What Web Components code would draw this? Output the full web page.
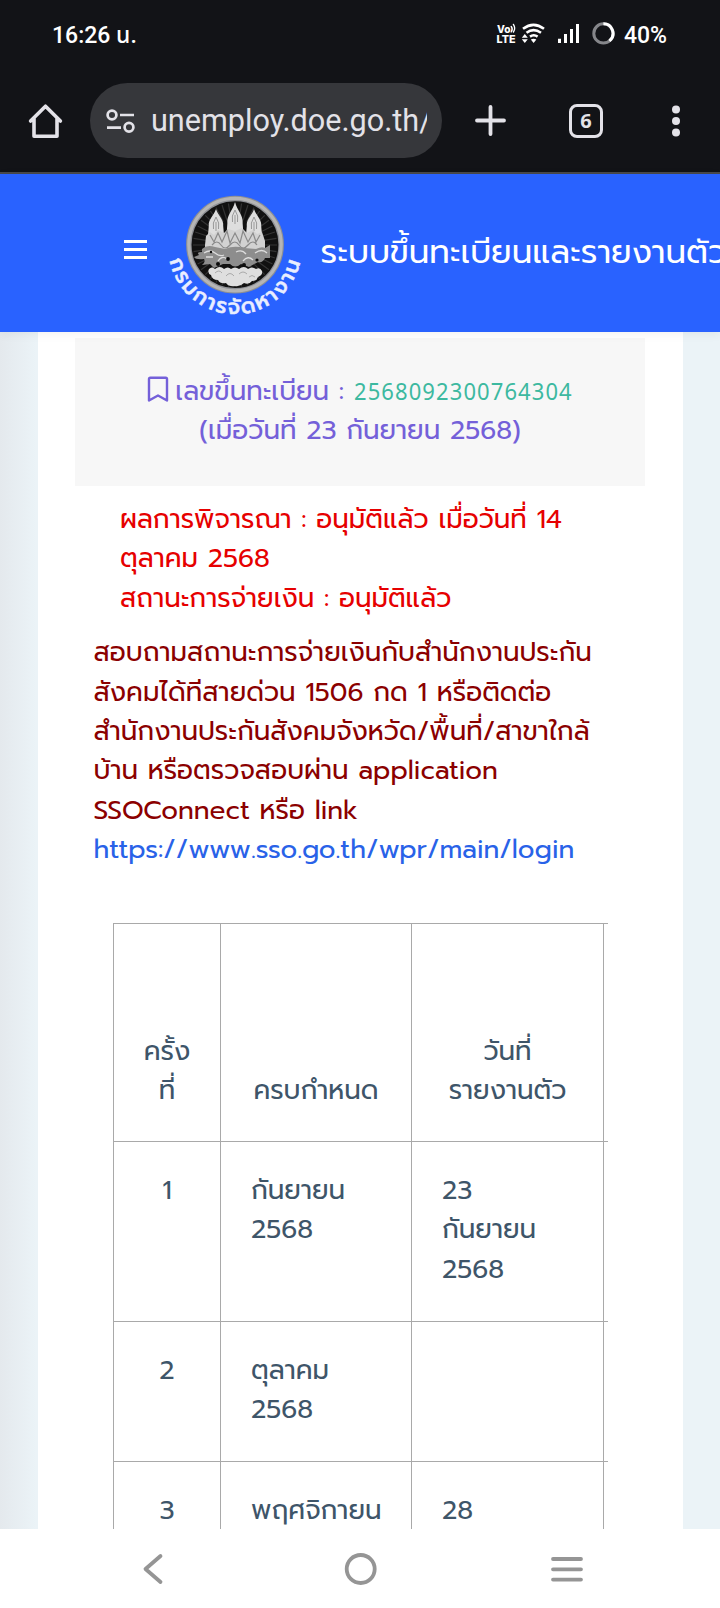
<!DOCTYPE html>
<html lang="th">
<head>
<meta charset="utf-8">
<title>ระบบขึ้นทะเบียนและรายงานตัว</title>
<style>
  body {
    margin: 0;
    width: 720px;
    height: 1608px;
    overflow: hidden;
    display: flex;
    flex-direction: column;
    font-family: Prompt, "Noto Sans Thai", "Noto Sans", sans-serif;
    background: #fff;
  }
</style>
</head>
<body>
<status-bar time="16:26 น." battery="40%"></status-bar>
<browser-bar url="unemploy.doe.go.th/" tabs="6"></browser-bar>
<site-header>ระบบขึ้นทะเบียนและรายงานตัว</site-header>
<page-panel>
  <register-card number="2568092300764304">
    <span slot="label">เลขขึ้นทะเบียน : </span>
    <span slot="date">(เมื่อวันที่ 23 กันยายน 2568)</span>
  </register-card>
  <result-note>
    <div>ผลการพิจารณา : อนุมัติแล้ว เมื่อวันที่ 14<br>ตุลาคม 2568</div>
    <div>สถานะการจ่ายเงิน : อนุมัติแล้ว</div>
  </result-note>
  <contact-note href="https://www.sso.go.th/wpr/main/login">สอบถามสถานะการจ่ายเงินกับสำนักงานประกัน<br>สังคมได้ทีสายด่วน 1506 กด 1 หรือติดต่อ<br>สำนักงานประกันสังคมจังหวัด/พื้นที่/สาขาใกล้<br>บ้าน หรือตรวจสอบผ่าน application<br>SSOConnect หรือ link</contact-note>
  <report-table></report-table>
</page-panel>
<nav-bar></nav-bar>

<script>
  class StatusBar extends HTMLElement {
    constructor() {
      super();
      this.attachShadow({ mode: "open" });
    }

    connectedCallback() {
      this.shadowRoot.innerHTML = `
        <style>
          :host {
            display: flex;
            flex: none;
            height: 70px;
            box-sizing: border-box;
            padding: 0 53px 0 52px;
            align-items: center;
            justify-content: space-between;
            background: #121317;
            color: #fff;
            font: 500 23px/70px Roboto, "Noto Sans Thai", sans-serif;
          }
          .icons { display: flex; align-items: center; }
          .text { padding-top: 1px; }
          .icons .text { margin-left: 8px; }
          svg { display: block; }
        </style>
        <span class="text">${this.getAttribute("time")}</span>
        <div class="icons">
          <svg width="126" height="40" viewBox="490 15 126 40">
            <g fill="#fff" font-family="Inter, sans-serif" font-weight="800">
              <text x="497" y="32.7" font-size="10.6" textLength="13.5" lengthAdjust="spacingAndGlyphs">Vo</text>
              <text x="496.5" y="42.8" font-size="10.8" textLength="19" lengthAdjust="spacingAndGlyphs">LTE</text>
            </g>
            <g fill="none" stroke="#fff" stroke-width="1.4" stroke-linecap="round">
              <path d="M511.2 26.5q2 2.6 0 5.4M513.4 24.4q2.6 4 0 7.6"/>
            </g>
            <g fill="none" stroke="#fff" stroke-width="2.6">
              <path d="M523 28.8Q533.5 20.8 544 28.8M526.5 32.8Q533.5 27.6 541 32.8M530 36.6Q533.7 34 537.6 36.6"/>
            </g>
            <path fill="#fff" d="M524.8 34l3 3.7h-6zM524.8 43l3-3.8h-6zM533.6 43l2.8-3.4q-2.8-1.8-5.6 0z"/>
            <path fill="#fff" d="M558 38.8h3V43h-3zM564 34h3v9h-3zM570 29h3v14h-3zM576 24h3v19h-3z"/>
            <circle cx="603.4" cy="33.4" r="9.6" fill="none" stroke="#85868a" stroke-width="3"/>
            <path d="M603.4 23.8A9.6 9.6 0 0 1 609.4 40.9" fill="none" stroke="#fff" stroke-width="3"/>
          </svg>
          <span class="text">${this.getAttribute("battery")}</span>
        </div>
      `;
    }
  }
  customElements.define("status-bar", StatusBar);

  class BrowserBar extends HTMLElement {
    constructor() {
      super();
      this.attachShadow({ mode: "open" });
    }

    connectedCallback() {
      this.shadowRoot.innerHTML = `
        <style>
          :host {
            display: flex;
            flex: none;
            height: 104px;
            box-sizing: border-box;
            padding: 13px 35px 14px 28px;
            border-bottom: 2px solid #48494c;
            align-items: center;
            background: #121317;
            color: #e3e2e8;
            font-family: Roboto, sans-serif;
          }
          svg { display: block; flex: none; }
          .url {
            display: flex;
            align-items: center;
            width: 352px;
            height: 75px;
            margin: 0 33px 0 27px;
            box-sizing: border-box;
            padding: 0 15px;
            border-radius: 38px;
            background: #36373b;
          }
          .url span {
            margin-left: 16px;
            width: 276px;
            overflow: hidden;
            white-space: nowrap;
            font-size: 30.6px;
            line-height: 46px;
          }
          .tabs {
            width: 34px;
            height: 34px;
            box-sizing: border-box;
            margin: 0 68px 0 63px;
            border: 3px solid #e3e2e8;
            border-radius: 8px;
            font: 700 20px/28px "Noto Sans", sans-serif;
            text-align: center;
          }
        </style>
        <svg width="35" height="36" viewBox="0 0 35 36" fill="none" stroke="#e3e2e8" stroke-width="3.6" stroke-linejoin="round" stroke-linecap="round">
          <path d="M2.6 18L17.5 3.2 32.4 18M6 15.5V33.2H29V15.5"/>
        </svg>
        <div class="url">
          <svg width="30" height="26" viewBox="0 0 30 26" fill="none" stroke="#e3e2e8" stroke-width="2.7">
            <circle cx="7" cy="7" r="4.4"/><path d="M15 7h14M2 19.7h14"/><circle cx="24" cy="19.3" r="4.4"/>
          </svg>
          <span>${this.getAttribute("url")}</span>
        </div>
        <svg width="31" height="31" viewBox="0 0 31 31" stroke="#e3e2e8" stroke-width="3.8" stroke-linecap="round"><path d="M15.5 2v27M2 15.5h27"/></svg>
        <div class="tabs">${this.getAttribute("tabs")}</div>
        <svg width="10" height="32" viewBox="0 0 10 32" fill="#e3e2e8"><circle cx="5" cy="4.5" r="4"/><circle cx="5" cy="16" r="4"/><circle cx="5" cy="27.5" r="4"/></svg>
      `;
    }
  }
  customElements.define("browser-bar", BrowserBar);

  // Department seal: three chedi-like flames over a conch and clouds
  class DoeSeal extends HTMLElement {
    constructor() {
      super();
      this.attachShadow({ mode: "open" });
    }

    connectedCallback() {
      const flame = (x, y, w, h) => `
        <path fill="#dedede" d="M${x} ${y}C${x + 2} ${y + h * 0.25} ${x + w} ${y + h * 0.4} ${x + w * 0.9} ${y + h * 0.65}L${x + w} ${y + h}H${x - w}L${x - w * 0.9} ${y + h * 0.65}C${x - w} ${y + h * 0.4} ${x - 2} ${y + h * 0.25} ${x} ${y}Z"/>
        <path fill="none" stroke="#999" stroke-width="1" d="M${x} ${y + 8}q-4 6 -2.5 12M${x} ${y + 8}q4 6 2.5 12M${x} ${y + 13}v9"/>`;
      let rays = "";
      for (let i = 0; i < 40; i++) {
        const a = i * Math.PI / 20;
        rays += `M${75 + 26 * Math.cos(a)} ${60 + 26 * Math.sin(a)}L${75 + 42 * Math.cos(a)} ${60 + 42 * Math.sin(a)}`;
      }
      this.shadowRoot.innerHTML = `
        <style>
          :host { display: block; flex: none; width: 150px; height: 140px; }
          svg { display: block; }
        </style>
        <svg width="150" height="140" viewBox="0 0 150 140">
          <circle cx="75" cy="59.6" r="46.2" fill="#111" stroke="#8d8f94" stroke-width="5.5"/>
          <circle cx="75" cy="59.6" r="46.2" fill="none" stroke="#b5b5b5" stroke-width="3.2"/>
          <path d="${rays}" stroke="#343434" stroke-width="1.2"/>
          ${flame(56, 24, 8, 26)}${flame(94, 24, 8, 26)}${flame(75, 17, 8.5, 33)}
          <path fill="#d2d2d2" d="M45 60l1-9 4-4 4 3 4-5 6 3 4-4 7 2 7-3 5 5 6-3 4 4 5-2 3 9v8H45z"/>
          <path fill="none" stroke="#8a8a8a" stroke-width="1.2" d="M50 50l4 7 4-9 4 9 5-11 3 12 5-10 5 10 3-12 5 11 5-9 3 9 4-7M52 60q5-6 9 0t9 0 9 0 9 0 9 0"/>
          <path fill="#8d8d8d" d="M42 64q5-5 13-2l10 2q9-4 19-1l12 1q6-3 9-1l5-3v13l-5 0q-2 5-7 4l-9 5-8-3q-6 5-11 0l-7 0-9 4-4-4-8 1q4-3 2-6-8 1-10-2l5-2q-3-3 3-3z"/>
          <path fill="none" stroke="#ddd" stroke-width="1.3" d="M44 68q6-4 11 0t9 2M58 76q4-6 9-2M83 76q5-6 10-1M95 68q7-5 12 0M46 72h7M76 67q6-3 10 2"/>
          <g fill="#0c0c0c"><circle cx="68" cy="74" r="1.9"/><circle cx="58" cy="79" r="2"/><circle cx="84" cy="80" r="2"/><circle cx="97" cy="75" r="1.6"/><circle cx="51" cy="67" r="1.2"/></g>
          <path fill="#dfdfdf" d="M49 84q3-3 6 0 5-4 9 0 4-3 7 0 4-3 8 0 5-4 9 0 4-3 8 0 4-2 6 2 1 4-4 6-1 4-6 4-3 4-8 2-4 4-9 3-6 1-9-3-6 1-8-3-6 0-7-5-4-2-2-6z"/>
          <path fill="none" stroke="#aaa" d="M55 88q4-4 7 0M66 91q4-5 8 0M79 89q4-4 8 0M89 92q3-3 6 0"/>
          <defs><path id="arc" d="M9.4 74A66.7 66.7 0 0 0 140.9 73.4"/></defs>
          <text font-family="Prompt, sans-serif" font-weight="500" font-size="21" fill="#e9eeff" stroke="#e9eeff" stroke-width="0.5">
            <textPath href="#arc" startOffset="1" textLength="182">กรมการจัดหางาน</textPath>
          </text>
        </svg>
      `;
    }
  }
  customElements.define("doe-seal", DoeSeal);

  class SiteHeader extends HTMLElement {
    constructor() {
      super();
      this.attachShadow({ mode: "open" });
    }

    connectedCallback() {
      this.shadowRoot.innerHTML = `
        <style>
          :host {
            display: flex;
            flex: none;
            height: 158px;
            box-sizing: border-box;
            padding-left: 124px;
            align-items: center;
            overflow: hidden;
            background: #2962ff;
            color: #fff;
            z-index: 1;
            box-shadow: 0 2px 10px rgba(0, 0, 0, 0.06);
          }
          .menu {
            flex: none;
            display: flex;
            flex-direction: column;
            gap: 5px;
            width: 23px;
            margin: 0 13px 7px 0;
          }
          .menu i { height: 3px; background: #fff; }
          doe-seal { margin-bottom: -4px; }
          .title {
            margin: 0 0 3px 10.5px;
            font-size: 32.6px;
            line-height: 48px;
            white-space: nowrap;
          }
        </style>
        <div class="menu"><i></i><i></i><i></i></div>
        <doe-seal></doe-seal>
        <span class="title"><slot></slot></span>
      `;
    }
  }
  customElements.define("site-header", SiteHeader);

  class PagePanel extends HTMLElement {
    constructor() {
      super();
      this.attachShadow({ mode: "open" });
      this.shadowRoot.innerHTML = `
        <style>
          :host {
            display: block;
            flex: none;
            height: 1197px;
            box-sizing: border-box;
            padding: 0 37px 0 38px;
            overflow: hidden;
            background: linear-gradient(90deg, #e4e9ed, #ebf3f7 36px);
            font-size: 26.27px;
            line-height: 39.4px;
          }
          .panel {
            height: 100%;
            box-sizing: border-box;
            padding: 6px 38px 0 37px;
            background: #fff;
          }
        </style>
        <div class="panel"><slot></slot></div>
      `;
    }
  }
  customElements.define("page-panel", PagePanel);

  class RegisterCard extends HTMLElement {
    constructor() {
      super();
      this.attachShadow({ mode: "open" });
    }

    connectedCallback() {
      this.shadowRoot.innerHTML = `
        <style>
          :host {
            display: block;
            height: 148px;
            box-sizing: border-box;
            padding-top: 34px;
            background: #f7f7f7;
            color: #7460d9;
            text-align: center;
            white-space: nowrap;
          }
          svg { vertical-align: -3px; margin-right: 6px; }
          /* narrow digits with open spacing */
          .number {
            display: inline-block;
            margin-right: -20px;
            color: #3db9a0;
            font: 24px/30px "Noto Sans", sans-serif;
            letter-spacing: 1.2px;
            transform: scaleX(0.916);
            transform-origin: left;
          }
          ::slotted(span) { white-space: pre; }
        </style>
        <div><svg width="22" height="27" viewBox="0 0 22 27" fill="none" stroke="#7460d9" stroke-width="2.4" stroke-linejoin="round"><path d="M2 24.5V3q0-1.3 1.3-1.3h15.4q1.3 0 1.3 1.3V24.5l-9-5z"/></svg><slot name="label"></slot><span class="number">${this.getAttribute("number")}</span></div>
        <div><slot name="date"></slot></div>
      `;
    }
  }
  customElements.define("register-card", RegisterCard);

  class ResultNote extends HTMLElement {
    constructor() {
      super();
      this.attachShadow({ mode: "open" });
      this.shadowRoot.innerHTML = `
        <style>
          :host {
            display: block;
            padding: 14px 0 0 45px;
            color: #e60000;
            white-space: nowrap;
          }
        </style>
        <slot></slot>
      `;
    }
  }
  customElements.define("result-note", ResultNote);

  class ContactNote extends HTMLElement {
    constructor() {
      super();
      this.attachShadow({ mode: "open" });
    }

    connectedCallback() {
      const href = this.getAttribute("href");
      this.shadowRoot.innerHTML = `
        <style>
          :host {
            display: block;
            padding: 15px 0 0 18.5px;
            color: #8b0000;
            white-space: nowrap;
          }
          a { color: #2962e8; text-decoration: none; }
        </style>
        <slot></slot><br><a href="${href}">${href}</a>
      `;
    }
  }
  customElements.define("contact-note", ContactNote);

  const rows = [
    ["1", "กันยายน<br>2568", "23<br>กันยายน<br>2568"],
    ["2", "ตุลาคม<br>2568", ""],
    ["3", "พฤศจิกายน", "28"]
  ];

  class ReportTable extends HTMLElement {
    constructor() {
      super();
      this.attachShadow({ mode: "open" });
    }

    connectedCallback() {
      this.shadowRoot.innerHTML = `
        <style>
          :host {
            display: block;
            width: 495px;
            margin: 53px 0 0 38px;
            overflow: hidden;
            color: #3e5569;
          }
          table {
            width: 600px;
            table-layout: fixed;
            border-collapse: collapse;
          }
          th, td {
            box-sizing: border-box;
            padding: 29px 0 30.8px 30px;
            border: 1px solid #a9a9a9;
            font-weight: 400;
            line-height: 39.7px;
            text-align: left;
            vertical-align: top;
            white-space: nowrap;
          }
          th { height: 218px; padding: 0 0 30px; line-height: 39.4px; text-align: center; vertical-align: bottom; }
          td:first-child { padding-left: 0; text-align: center; }
        </style>
        <table>
          <colgroup><col style="width:107px"><col style="width:191px"><col style="width:192px"><col></colgroup>
          <tr><th>ครั้ง<br>ที่</th><th>ครบกำหนด</th><th>วันที่<br>รายงานตัว</th><th></th></tr>
          ${rows.map((r) => `<tr>${r.map((c) => `<td>${c}</td>`).join("")}<td></td></tr>`).join("")}
        </table>
      `;
    }
  }
  customElements.define("report-table", ReportTable);

  class NavBar extends HTMLElement {
    constructor() {
      super();
      this.attachShadow({ mode: "open" });
      this.shadowRoot.innerHTML = `
        <style>
          :host {
            display: flex;
            flex: 1;
            padding: 0 135px 0 140px;
            align-items: center;
            justify-content: space-between;
            background: #fff;
          }
          svg { display: block; fill: none; stroke: #959595; stroke-width: 3.8; stroke-linecap: round; stroke-linejoin: round; }
        </style>
        <svg width="26" height="34" viewBox="0 0 26 34"><path d="M20.5 4L5.5 17l15 13"/></svg>
        <svg width="40" height="34" viewBox="0 0 40 34"><circle cx="22.7" cy="17" r="14"/></svg>
        <svg width="36" height="34" viewBox="0 0 36 34"><path d="M4 7h28M4 17.3h28M4 27.6h28"/></svg>
      `;
    }
  }
  customElements.define("nav-bar", NavBar);
</script>
</body>
</html>
